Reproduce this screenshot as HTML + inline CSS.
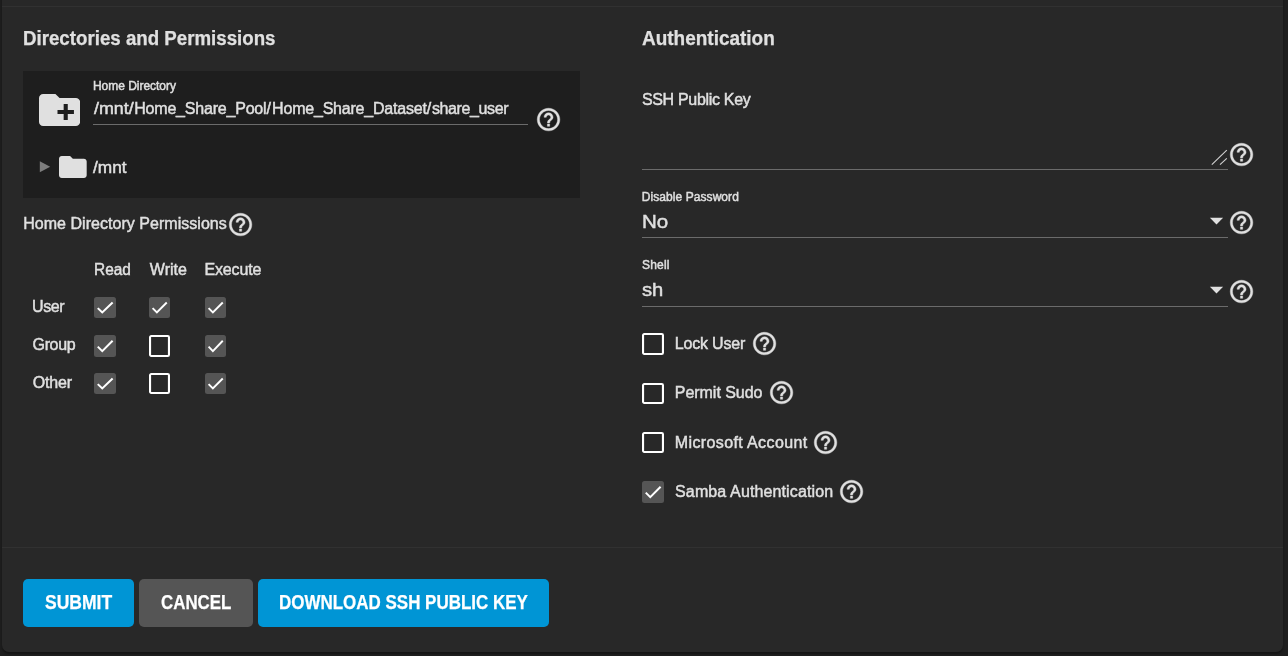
<!DOCTYPE html>
<html lang="en"><head><meta charset="utf-8"><title>Edit User</title>
<style>
html,body{margin:0;padding:0}
body{width:1288px;height:656px;overflow:hidden;background:#1e1e1e;position:relative;font-family:"Liberation Sans",sans-serif;-webkit-font-smoothing:antialiased}
.card{position:absolute;left:2px;top:-10px;width:1281px;height:662px;background:#282828;border-radius:7px;box-shadow:0 2px 2px rgba(0,0,0,.35)}
.hl{position:absolute;height:1px}
.t{position:absolute;white-space:nowrap;line-height:1;margin:0;transform-origin:0 0}
#L{position:absolute;left:0;top:0;width:1288px;height:656px;will-change:transform}
.ic{position:absolute;display:block}
.box{position:absolute;left:23px;top:71px;width:557px;height:126.5px;background:#1e1e1e}
.cb{position:absolute;box-sizing:border-box;border-radius:2.5px}
.cb.on{background:#555}
.cb.on svg{position:absolute;left:0;top:0;width:100%;height:100%;display:block}
.cb.off{border:2.6px solid #fff}
.btn{position:absolute;top:579px;height:48px;border-radius:5px}
.blue{background:#0095d5}
.gray{background:#555}
</style></head><body>
<div class="card"></div>
<div class="hl" style="left:2px;top:6px;width:1281px;background:#313131"></div>
<div class="hl" style="left:2px;top:547px;width:1281px;background:#313131"></div>

<div class="box"></div>
<svg class="ic" style="left:38.9px;top:93.9px;width:41.1px;height:31.9px" viewBox="2 4 20 16" preserveAspectRatio="none" fill="#e0e0e0"><path d="M20 6h-8l-2-2H4c-1.11 0-1.99.89-1.99 2L2 18c0 1.11.89 2 2 2h16c1.11 0 2-.89 2-2V8c0-1.11-.89-2-2-2zm-1 8h-3v3h-2v-3h-3v-2h3V9h2v3h3v2z"/></svg>
<div class="hl" style="left:93px;top:124px;width:435px;background:#6b6b6b"></div>
<svg class="ic" style="left:534.75px;top:105.95px;width:27.1px;height:27.1px" viewBox="0 0 24 24" fill="#e0e0e0"><path stroke="#e0e0e0" stroke-width="0.38" d="M11 18h2v-2h-2v2zm1-16C6.48 2 2 6.48 2 12s4.48 10 10 10 10-4.48 10-10S17.52 2 12 2zm0 18c-4.41 0-8-3.59-8-8s3.59-8 8-8 8 3.59 8 8-3.59 8-8 8zm0-14c-2.21 0-4 1.79-4 4h2c0-1.1.9-2 2-2s2 .9 2 2c0 2-3 1.75-3 5h2c0-2.25 3-2.5 3-5 0-2.21-1.79-4-4-4z"/></svg>
<svg class="ic" style="left:39px;top:160px;width:13px;height:14px" viewBox="0 0 13 14"><path d="M0.8 1.3 L11.2 6.8 L0.8 12.3z" fill="#7d7d7d"/></svg>
<svg class="ic" style="left:58.9px;top:155.8px;width:27.7px;height:22px" viewBox="2 4 20 16" preserveAspectRatio="none" fill="#e0e0e0"><path d="M10 4H4c-1.1 0-1.99.9-1.99 2L2 18c0 1.1.9 2 2 2h16c1.1 0 2-.9 2-2V8c0-1.1-.9-2-2-2h-8l-2-2z"/></svg>
<svg class="ic" style="left:227.05px;top:210.85px;width:27.1px;height:27.1px" viewBox="0 0 24 24" fill="#e0e0e0"><path stroke="#e0e0e0" stroke-width="0.38" d="M11 18h2v-2h-2v2zm1-16C6.48 2 2 6.48 2 12s4.48 10 10 10 10-4.48 10-10S17.52 2 12 2zm0 18c-4.41 0-8-3.59-8-8s3.59-8 8-8 8 3.59 8 8-3.59 8-8 8zm0-14c-2.21 0-4 1.79-4 4h2c0-1.1.9-2 2-2s2 .9 2 2c0 2-3 1.75-3 5h2c0-2.25 3-2.5 3-5 0-2.21-1.79-4-4-4z"/></svg>
<div class="cb on" style="left:94px;top:297px;width:22px;height:21px"><svg viewBox="0 0 24 24" preserveAspectRatio="none"><path d="M4.1 12.7 9 17.6 20.3 6.3" fill="none" stroke="#fff" stroke-width="2.2"/></svg></div>
<div class="cb on" style="left:149px;top:297px;width:21px;height:21px"><svg viewBox="0 0 24 24" preserveAspectRatio="none"><path d="M4.1 12.7 9 17.6 20.3 6.3" fill="none" stroke="#fff" stroke-width="2.2"/></svg></div>
<div class="cb on" style="left:205px;top:297px;width:21px;height:21px"><svg viewBox="0 0 24 24" preserveAspectRatio="none"><path d="M4.1 12.7 9 17.6 20.3 6.3" fill="none" stroke="#fff" stroke-width="2.2"/></svg></div>
<div class="cb on" style="left:94px;top:335px;width:22px;height:22px"><svg viewBox="0 0 24 24" preserveAspectRatio="none"><path d="M4.1 12.7 9 17.6 20.3 6.3" fill="none" stroke="#fff" stroke-width="2.2"/></svg></div>
<svg class="ic" style="left:149px;top:335px;width:21px;height:22px" viewBox="0 0 21 22"><rect x="1.05" y="1.05" width="18.9" height="19.9" rx="1.2" fill="none" stroke="#fff" stroke-width="2.1"/></svg>
<div class="cb on" style="left:205px;top:335px;width:21px;height:22px"><svg viewBox="0 0 24 24" preserveAspectRatio="none"><path d="M4.1 12.7 9 17.6 20.3 6.3" fill="none" stroke="#fff" stroke-width="2.2"/></svg></div>
<div class="cb on" style="left:94px;top:373px;width:22px;height:21px"><svg viewBox="0 0 24 24" preserveAspectRatio="none"><path d="M4.1 12.7 9 17.6 20.3 6.3" fill="none" stroke="#fff" stroke-width="2.2"/></svg></div>
<svg class="ic" style="left:149px;top:373px;width:21px;height:21px" viewBox="0 0 21 21"><rect x="1.05" y="1.05" width="18.9" height="18.9" rx="1.2" fill="none" stroke="#fff" stroke-width="2.1"/></svg>
<div class="cb on" style="left:205px;top:373px;width:21px;height:21px"><svg viewBox="0 0 24 24" preserveAspectRatio="none"><path d="M4.1 12.7 9 17.6 20.3 6.3" fill="none" stroke="#fff" stroke-width="2.2"/></svg></div>
<div class="hl" style="left:642px;top:169px;width:586px;background:#6b6b6b"></div>
<div class="hl" style="left:642px;top:237px;width:586px;background:#6b6b6b"></div>
<div class="hl" style="left:642px;top:306px;width:586px;background:#6b6b6b"></div>
<svg class="ic" style="left:1208px;top:146px;width:22px;height:22px" viewBox="0 0 22 22"><path d="M3.8 18.7 L18.8 4.1 M12 18.7 L18.8 12.3" stroke="#cfcfcf" stroke-width="1.15" fill="none"/></svg>
<svg class="ic" style="left:1228.15px;top:140.85px;width:27.1px;height:27.1px" viewBox="0 0 24 24" fill="#e0e0e0"><path stroke="#e0e0e0" stroke-width="0.38" d="M11 18h2v-2h-2v2zm1-16C6.48 2 2 6.48 2 12s4.48 10 10 10 10-4.48 10-10S17.52 2 12 2zm0 18c-4.41 0-8-3.59-8-8s3.59-8 8-8 8 3.59 8 8-3.59 8-8 8zm0-14c-2.21 0-4 1.79-4 4h2c0-1.1.9-2 2-2s2 .9 2 2c0 2-3 1.75-3 5h2c0-2.25 3-2.5 3-5 0-2.21-1.79-4-4-4z"/></svg>
<svg class="ic" style="left:1228.15px;top:208.75px;width:27.1px;height:27.1px" viewBox="0 0 24 24" fill="#e0e0e0"><path stroke="#e0e0e0" stroke-width="0.38" d="M11 18h2v-2h-2v2zm1-16C6.48 2 2 6.48 2 12s4.48 10 10 10 10-4.48 10-10S17.52 2 12 2zm0 18c-4.41 0-8-3.59-8-8s3.59-8 8-8 8 3.59 8 8-3.59 8-8 8zm0-14c-2.21 0-4 1.79-4 4h2c0-1.1.9-2 2-2s2 .9 2 2c0 2-3 1.75-3 5h2c0-2.25 3-2.5 3-5 0-2.21-1.79-4-4-4z"/></svg>
<svg class="ic" style="left:1228.15px;top:277.75px;width:27.1px;height:27.1px" viewBox="0 0 24 24" fill="#e0e0e0"><path stroke="#e0e0e0" stroke-width="0.38" d="M11 18h2v-2h-2v2zm1-16C6.48 2 2 6.48 2 12s4.48 10 10 10 10-4.48 10-10S17.52 2 12 2zm0 18c-4.41 0-8-3.59-8-8s3.59-8 8-8 8 3.59 8 8-3.59 8-8 8zm0-14c-2.21 0-4 1.79-4 4h2c0-1.1.9-2 2-2s2 .9 2 2c0 2-3 1.75-3 5h2c0-2.25 3-2.5 3-5 0-2.21-1.79-4-4-4z"/></svg>
<svg class="ic" style="left:1208px;top:215.1px;width:17px;height:12px" viewBox="0 0 17 12"><path d="M1.9 2.7 H15.1 L8.5 9.4z" fill="#e0e0e0"/></svg>
<svg class="ic" style="left:1208px;top:283.9px;width:17px;height:12px" viewBox="0 0 17 12"><path d="M1.9 2.7 H15.1 L8.5 9.4z" fill="#e0e0e0"/></svg>
<svg class="ic" style="left:642px;top:333px;width:22px;height:22px" viewBox="0 0 22 22"><rect x="1.05" y="1.05" width="19.9" height="19.9" rx="1.2" fill="none" stroke="#fff" stroke-width="2.1"/></svg>
<svg class="ic" style="left:642px;top:383px;width:22px;height:21px" viewBox="0 0 22 21"><rect x="1.05" y="1.05" width="19.9" height="18.9" rx="1.2" fill="none" stroke="#fff" stroke-width="2.1"/></svg>
<svg class="ic" style="left:642px;top:432px;width:22px;height:21px" viewBox="0 0 22 21"><rect x="1.05" y="1.05" width="19.9" height="18.9" rx="1.2" fill="none" stroke="#fff" stroke-width="2.1"/></svg>
<div class="cb on" style="left:642px;top:481px;width:22px;height:22px"><svg viewBox="0 0 24 24" preserveAspectRatio="none"><path d="M4.1 12.7 9 17.6 20.3 6.3" fill="none" stroke="#fff" stroke-width="2.2"/></svg></div>
<svg class="ic" style="left:750.95px;top:329.85px;width:27.1px;height:27.1px" viewBox="0 0 24 24" fill="#e0e0e0"><path stroke="#e0e0e0" stroke-width="0.38" d="M11 18h2v-2h-2v2zm1-16C6.48 2 2 6.48 2 12s4.48 10 10 10 10-4.48 10-10S17.52 2 12 2zm0 18c-4.41 0-8-3.59-8-8s3.59-8 8-8 8 3.59 8 8-3.59 8-8 8zm0-14c-2.21 0-4 1.79-4 4h2c0-1.1.9-2 2-2s2 .9 2 2c0 2-3 1.75-3 5h2c0-2.25 3-2.5 3-5 0-2.21-1.79-4-4-4z"/></svg>
<svg class="ic" style="left:767.95px;top:378.75px;width:27.1px;height:27.1px" viewBox="0 0 24 24" fill="#e0e0e0"><path stroke="#e0e0e0" stroke-width="0.38" d="M11 18h2v-2h-2v2zm1-16C6.48 2 2 6.48 2 12s4.48 10 10 10 10-4.48 10-10S17.52 2 12 2zm0 18c-4.41 0-8-3.59-8-8s3.59-8 8-8 8 3.59 8 8-3.59 8-8 8zm0-14c-2.21 0-4 1.79-4 4h2c0-1.1.9-2 2-2s2 .9 2 2c0 2-3 1.75-3 5h2c0-2.25 3-2.5 3-5 0-2.21-1.79-4-4-4z"/></svg>
<svg class="ic" style="left:812.15px;top:428.85px;width:27.1px;height:27.1px" viewBox="0 0 24 24" fill="#e0e0e0"><path stroke="#e0e0e0" stroke-width="0.38" d="M11 18h2v-2h-2v2zm1-16C6.48 2 2 6.48 2 12s4.48 10 10 10 10-4.48 10-10S17.52 2 12 2zm0 18c-4.41 0-8-3.59-8-8s3.59-8 8-8 8 3.59 8 8-3.59 8-8 8zm0-14c-2.21 0-4 1.79-4 4h2c0-1.1.9-2 2-2s2 .9 2 2c0 2-3 1.75-3 5h2c0-2.25 3-2.5 3-5 0-2.21-1.79-4-4-4z"/></svg>
<svg class="ic" style="left:838.05px;top:477.95px;width:27.1px;height:27.1px" viewBox="0 0 24 24" fill="#e0e0e0"><path stroke="#e0e0e0" stroke-width="0.38" d="M11 18h2v-2h-2v2zm1-16C6.48 2 2 6.48 2 12s4.48 10 10 10 10-4.48 10-10S17.52 2 12 2zm0 18c-4.41 0-8-3.59-8-8s3.59-8 8-8 8 3.59 8 8-3.59 8-8 8zm0-14c-2.21 0-4 1.79-4 4h2c0-1.1.9-2 2-2s2 .9 2 2c0 2-3 1.75-3 5h2c0-2.25 3-2.5 3-5 0-2.21-1.79-4-4-4z"/></svg>
<div class="btn blue" style="left:23px;width:111px"></div>
<div class="btn gray" style="left:139px;width:114px"></div>
<div class="btn blue" style="left:258px;width:291px"></div>
<div id="L">
<div class="t" id="h1" style="left:23.48px;top:28.07px;font-size:20px;color:#e0e0e0;font-weight:700;-webkit-text-stroke:0.25px #e0e0e0;transform:scaleX(0.9349)">Directories and Permissions</div>
<div class="t" id="h2" style="left:642.07px;top:28.07px;font-size:20px;color:#e0e0e0;font-weight:700;-webkit-text-stroke:0.25px #e0e0e0;transform:scaleX(0.9485)">Authentication</div>
<div class="t" id="lblhome" style="left:92.92px;top:79.84px;font-size:12px;color:#e0e0e0;-webkit-text-stroke:0.45px #e0e0e0;letter-spacing:-0.022px">Home Directory</div>
<div id="path">
<span class="t" id="path1" style="left:94.04px;top:101.21px;font-size:16px;color:#e0e0e0;-webkit-text-stroke:0.45px #e0e0e0;transform:scaleX(1.1153)">/mnt/</span><span class="t" id="path2" style="left:134.20px;top:101.21px;font-size:16px;color:#e0e0e0;-webkit-text-stroke:0.45px #e0e0e0;letter-spacing:-0.197px">Home_Share_Pool/</span><span class="t" id="path3" style="left:272.10px;top:101.21px;font-size:16px;color:#e0e0e0;-webkit-text-stroke:0.45px #e0e0e0;letter-spacing:-0.207px">Home_Share_Dataset/</span><span class="t" id="path4" style="left:431.89px;top:101.21px;font-size:16px;color:#e0e0e0;-webkit-text-stroke:0.45px #e0e0e0;letter-spacing:-0.376px">share_user</span></div>
<div class="t" id="mnt" style="left:93.25px;top:160.26px;font-size:16px;color:#e0e0e0;-webkit-text-stroke:0.45px #e0e0e0;transform:scaleX(1.0778)">/mnt</div>
<div class="t" id="hdp" style="left:23.22px;top:216.21px;font-size:16px;color:#e0e0e0;-webkit-text-stroke:0.45px #e0e0e0;letter-spacing:0.033px">Home Directory Permissions</div>
<div class="t" id="read" style="left:93.82px;top:261.96px;font-size:16px;color:#e0e0e0;-webkit-text-stroke:0.45px #e0e0e0;transform:scaleX(0.9640)">Read</div>
<div class="t" id="write" style="left:149.83px;top:261.96px;font-size:16px;color:#e0e0e0;-webkit-text-stroke:0.45px #e0e0e0;letter-spacing:0.001px">Write</div>
<div class="t" id="exec" style="left:204.40px;top:261.96px;font-size:16px;color:#e0e0e0;-webkit-text-stroke:0.45px #e0e0e0;letter-spacing:-0.124px">Execute</div>
<div class="t" id="user" style="left:31.96px;top:298.71px;font-size:16px;color:#e0e0e0;-webkit-text-stroke:0.45px #e0e0e0;letter-spacing:-0.362px">User</div>
<div class="t" id="group" style="left:32.58px;top:336.96px;font-size:16px;color:#e0e0e0;-webkit-text-stroke:0.45px #e0e0e0;letter-spacing:-0.364px">Group</div>
<div class="t" id="other" style="left:32.75px;top:375.46px;font-size:16px;color:#e0e0e0;-webkit-text-stroke:0.45px #e0e0e0;letter-spacing:-0.159px">Other</div>
<div class="t" id="ssh" style="left:641.90px;top:92.46px;font-size:16px;color:#e0e0e0;-webkit-text-stroke:0.45px #e0e0e0;letter-spacing:-0.314px">SSH Public Key</div>
<div class="t" id="dp" style="left:641.83px;top:191.09px;font-size:12px;color:#e0e0e0;-webkit-text-stroke:0.45px #e0e0e0;letter-spacing:0.065px">Disable Password</div>
<div class="t" id="no" style="left:641.50px;top:211.75px;font-size:19.2px;color:#e0e0e0;-webkit-text-stroke:0.45px #e0e0e0;transform:scaleX(1.0692)">No</div>
<div class="t" id="shell" style="left:642.02px;top:259.09px;font-size:12px;color:#e0e0e0;-webkit-text-stroke:0.45px #e0e0e0;letter-spacing:0.193px">Shell</div>
<div class="t" id="sh" style="left:642.15px;top:280.00px;font-size:19.2px;color:#e0e0e0;-webkit-text-stroke:0.45px #e0e0e0;transform:scaleX(1.0547)">sh</div>
<div class="t" id="lock" style="left:674.77px;top:335.71px;font-size:16px;color:#e0e0e0;-webkit-text-stroke:0.45px #e0e0e0;letter-spacing:-0.181px">Lock User</div>
<div class="t" id="sudo" style="left:674.78px;top:385.46px;font-size:16px;color:#e0e0e0;-webkit-text-stroke:0.45px #e0e0e0;letter-spacing:-0.034px">Permit Sudo</div>
<div class="t" id="ms" style="left:674.77px;top:435.46px;font-size:16px;color:#e0e0e0;-webkit-text-stroke:0.45px #e0e0e0;letter-spacing:0.383px">Microsoft Account</div>
<div class="t" id="smb" style="left:675.09px;top:484.46px;font-size:16px;color:#e0e0e0;-webkit-text-stroke:0.45px #e0e0e0;letter-spacing:0.124px">Samba Authentication</div>
<div class="t" id="bsub" style="left:45.10px;top:592.66px;font-size:19.3px;color:#fff;font-weight:700;-webkit-text-stroke:0.25px #fff;transform:scaleX(0.9082)">SUBMIT</div>
<div class="t" id="bcan" style="left:160.52px;top:592.66px;font-size:19.3px;color:#fff;font-weight:700;-webkit-text-stroke:0.25px #fff;transform:scaleX(0.8764)">CANCEL</div>
<div class="t" id="bdl" style="left:278.84px;top:592.66px;font-size:19.3px;color:#fff;font-weight:700;-webkit-text-stroke:0.25px #fff;transform:scaleX(0.8800)">DOWNLOAD SSH PUBLIC KEY</div>
</div>
</body></html>
